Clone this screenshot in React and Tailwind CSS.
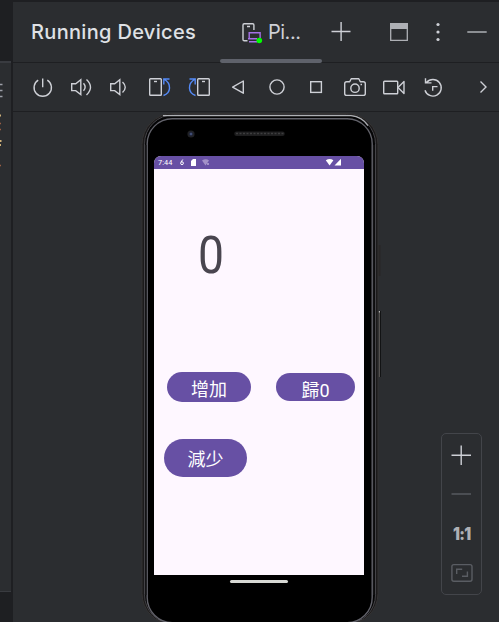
import React from "react";

const toolIcons = [
  { id: "power", d: <><path d="M38.2 80.2A8.7 8.7 0 1 0 47.3 80.2" /><path d="M42.7 78.5v8.7" /></> },
  { id: "volume-up", d: <><path d="M71.7 83.8h4L80.8 79.8v14.8l-5.1-4h-4z" /><path d="M83.5 83.2q3.3 3.8 0 7.6M86.5 79.5q8 7.7 0 15.4" /></> },
  { id: "volume-down", d: <><path d="M110.7 83.8h4L119.8 79.8v14.8l-5.1-4h-4z" /><path d="M122.5 82q5.5 5.2 0 10.4" /></> },
  { id: "rotate-left", d: <><rect x="149.7" y="78.7" width="11.6" height="16.6" rx=".8" /><path d="M154 81.5h3" /><path stroke="#548af7" d="M163.5 95.5C171 93 172 83.5 163.8 79M163.8 84.5V79h5.7" /></> },
  { id: "rotate-right", d: <><rect x="197.7" y="78.7" width="11.6" height="16.6" rx=".8" /><path d="M202 81.5h3" /><path stroke="#548af7" d="M195.5 95.5C188 93 187 83.5 195.2 79M195.2 84.5V79h-5.7" /></> },
  { id: "back", d: <path strokeLinejoin="round" d="M243.3 81v12.2L232.6 87.1z" /> },
  { id: "home", d: <circle cx="277" cy="87" r="7.1" /> },
  { id: "overview", d: <rect x="310.7" y="81.7" width="10.7" height="10.7" /> },
  { id: "camera", d: <><path strokeLinejoin="round" d="M346.7 81.7h3l1.5-2.9h7.6l1.5 2.9h3q2 0 2 2v9.7q0 2-2 2h-16.6q-2 0-2-2v-9.7q0-2 2-2z" /><circle cx="355" cy="88.2" r="4.2" /><path d="M360.5 84.5h1.5" /></> },
  { id: "video", d: <><rect x="383.7" y="81.2" width="14" height="12.6" rx=".8" /><path strokeLinejoin="round" d="M398 87.5l6-6v12z" /></> },
  { id: "snapshots", d: <><path d="M426.5 82.5A8.3 8.3 0 1 1 425 90.2M425.5 78.3v4.6h6M432.7 90.8v-4.2h4.8" /></> },
];

function ToolIcon({ icon, index }) {
  return (
    <svg className="h-12 w-[39px] shrink-0" viewBox={`${23 + 39 * index} 63 39 48`} fill="none" stroke="#ced0d6" strokeWidth="1.4">
      {icon.d}
    </svg>
  );
}

function Header() {
  return (
    <div className="flex h-[60px] w-full shrink-0">
      <h1 className="ml-[18px] w-[189px] whitespace-nowrap pt-[15px] text-[20px] font-medium leading-[30px] tracking-[0.32px] text-[#dfe1e5]">Running Devices</h1>
      <div className="relative flex w-[102px] pl-[21px]">
        <svg className="mt-[18px] h-6 w-6 shrink-0" viewBox="241 20 24 24" fill="none" strokeWidth="1.4">
          <path stroke="#ced0d6" d="M247.5 40.7h-3.3q-1.2 0-1.2-1.2V24.9q0-1.2 1.2-1.2h8.5q1.2 0 1.2 1.2V30M247 26.5h3" />
          <path stroke="#a571e6" d="M249.2 38v-5.3h10.9V38M248 38.7h9M249 41.8h8" />
          <circle cx="259.3" cy="40.5" r="2.8" fill="#00ff00" />
        </svg>
        <span className="ml-[3px] pt-[15px] text-[20px] leading-[30px] tracking-[-0.5px] text-[#ced0d6]">Pi...</span>
        <div className="absolute -bottom-px left-0 z-10 h-1 w-full rounded-full bg-[#5f626b]" />
      </div>
      <svg className="h-[60px] w-[177px]" viewBox="322 2 177 60" fill="none" stroke="#ced0d6" strokeWidth="1.4">
        <path d="M331.5 31.5h19M341.1 22v19" />
        <path stroke="#aeb0b5" strokeWidth="1.3" d="M390.7 24v16.4h16.6V24" />
        <path fill="#aeb0b5" stroke="none" d="M390 23h18v6h-18z" />
        <g fill="#ced0d6" stroke="none"><circle cx="438" cy="24.5" r="1.6" /><circle cx="438" cy="32" r="1.6" /><circle cx="438" cy="39.5" r="1.6" /></g>
        <path stroke="#aeb0b5" strokeWidth="1.5" d="M467.3 32h19.4" />
      </svg>
    </div>
  );
}

function Phone() {
  return (
    <div className="relative ml-[128px] h-[510px] w-[242px] shrink-0 overflow-hidden">
      <svg className="absolute inset-0 h-full w-full" viewBox="141 112 242 510" fill="none">
        <path fill="#292727" d="M378 245h2.5v31H378z" />
        <path stroke="#080808" d="M380.2 311v66" />
        <path stroke="#625e5a" d="M379.3 311v66" />
        <path stroke="#c9c9c9" d="M379.3 311v1.5" />
        <rect x="142" y="113.5" width="236" height="511" rx="31" fill="#1b1a1b" stroke="#353333" />
        <rect x="144.5" y="114.8" width="231" height="509" rx="29" fill="#050506" stroke="#454448" strokeWidth="1" />
        <rect x="147.2" y="118.8" width="225" height="503.8" rx="25" fill="#000" stroke="#62626a" strokeWidth="1.4" />
        <path stroke="#aeb0b4" strokeWidth="1.3" d="M163 115.6h188q11 1 17 10" />
        <path stroke="#141416" strokeWidth="1.5" d="M145.8 145v450M373.8 145v450" />
        <circle cx="191" cy="134" r="3.6" fill="#202125" />
        <circle cx="191" cy="134" r="1.8" fill="#263052" />
        <circle cx="191" cy="134" r=".7" fill="#7183b1" />
        <path stroke="#1d1d1e" strokeWidth="4.5" strokeLinecap="round" d="M236.5 133.7h46" />
        <path stroke="#3d3d3e" strokeWidth="1.3" strokeDasharray="2 1.5" d="M236 133.5h48" />
      </svg>
      <div className="relative ml-[13px] mt-11 flex h-[419px] w-[210px] flex-col overflow-hidden rounded-t-[7px] bg-[#fef7ff]">
        <div className="flex h-[13px] shrink-0 items-center bg-[#6750a4] pl-[4px] text-white">
          <span className="w-[20px] font-[Roboto] text-[7.3px] leading-[13px] tracking-[0.1px]">7:44</span>
          <svg className="h-[13px] w-[186px]" viewBox="178 156 186 13">
            <path stroke="#fff" fill="none" d="M182.8 159.5l-1.8 2.5" />
            <circle cx="182" cy="163.2" r="1.4" stroke="#fff" fill="none" />
            <path fill="#fff" d="M191 161l2-2h3v7h-5zM334.5 165.5l6.5-6.8v6.8z" />
            <path fill="#a391c8" d="M202 160.5q4-2.5 7 0l-3.5 5zM207 163h2v2h-2z" />
            <path fill="#fff" d="M325.8 160.3q4-2.8 7.6 0l-3.8 5.2z" />
          </svg>
        </div>
        <div className="ml-[44px] mt-[55px] h-[64px] w-[32px] origin-left scale-x-[0.89] font-[Roboto] text-[52px] leading-[64px] text-[#49454f]">0</div>
        <div className="ml-[13px] mt-[83px] flex h-[31px] shrink-0 items-center font-[Roboto,'Noto_Sans_CJK_TC',sans-serif] text-[18px] text-white">
          <button className="h-[30px] w-[84px] rounded-full bg-[#6750a4] pt-[6px] leading-[24px]">增加</button>
          <button className="ml-[25px] h-7 w-[79px] rounded-full bg-[#6750a4] pt-[6px] leading-[22px]"><span className="relative top-px">歸0</span></button>
        </div>
        <button className="ml-[10px] mt-[37px] h-[38px] w-[83px] shrink-0 rounded-full bg-[#6750a4] font-['Noto_Sans_CJK_TC',sans-serif] text-[18px] leading-[38px] text-white">減少</button>
      </div>
      <div className="relative ml-[89px] mt-[5px] h-[3px] w-[58px] rounded-full bg-[#d8d9d5]" />
    </div>
  );
}

function ZoomControls() {
  return (
    <div className="ml-[58px] mt-[321px] flex h-[162px] w-[41px] shrink-0 flex-col items-center rounded-[5px] border border-[#43454a]">
      <svg className="h-[84px] w-10" viewBox="442 434 40 84" fill="none" stroke="#ced0d6" strokeWidth="1.4">
        <path d="M451.5 455.3h19.5M461.2 445.5V465" />
        <path stroke="#5a5d63" d="M451.5 494h19.5" />
      </svg>
      <span className="h-[32px] origin-center scale-x-90 text-[17px] font-black leading-[32px] tracking-[-0.7px] text-[#aeb0b5]">1:1</span>
      <svg className="mt-[12px] h-[20px] w-[22px]" viewBox="451 562 22 20" fill="none" stroke="#5a5d63" strokeWidth="1.4">
        <rect x="451.9" y="564.6" width="20.1" height="16.6" rx="2" />
        <path d="M456.7 574v-4.7h5.5M462 576.3h5.4v-4.8" />
      </svg>
    </div>
  );
}

export default function App() {
  return (
    <main className="flex h-[622px] w-[499px] overflow-hidden bg-[#1e1f22] font-[Inter]">
      <div className="h-full w-[11px] shrink-0 pt-[61px]">
        <div className="h-[531px] border-b border-t-2 border-[#393b40] bg-[#2b2d30]">
          <svg className="h-[110px] w-[11px]" viewBox="0 63 11 110" fill="none">
            <path stroke="#9da0a8" strokeWidth="1.3" d="M0 84.5h2.5M0 90.5h2.5M0 96.5h2.5" />
            <path stroke="#cfb17a" strokeWidth="2" d="M0 115.5h1M0 141h1.5M0 145h1" />
            <path stroke="#9b5f43" strokeWidth="1.5" d="M0 123.5h1M0 129.5h1M0 165.5h1" />
          </svg>
        </div>
      </div>
      <section className="ml-[2px] flex w-[486px] shrink-0 flex-col pt-[2px]">
        <div className="h-[60px] bg-[#2b2d30]"><Header /></div>
        <div className="mt-px flex h-12 shrink-0 bg-[#2b2d30] pl-[10px]">
          {toolIcons.map((icon, index) => <ToolIcon key={icon.id} icon={icon} index={index} />)}
          <svg className="h-12 w-[47px]" viewBox="452 63 47 48" fill="none" stroke="#ced0d6" strokeWidth="1.4"><path d="M480.5 81.5l5.5 5.5-5.5 5.5" /></svg>
        </div>
        <div className="mt-px flex h-[510px] shrink-0 bg-[#2b2d30]">
          <Phone />
          <ZoomControls />
        </div>
      </section>
    </main>
  );
}
